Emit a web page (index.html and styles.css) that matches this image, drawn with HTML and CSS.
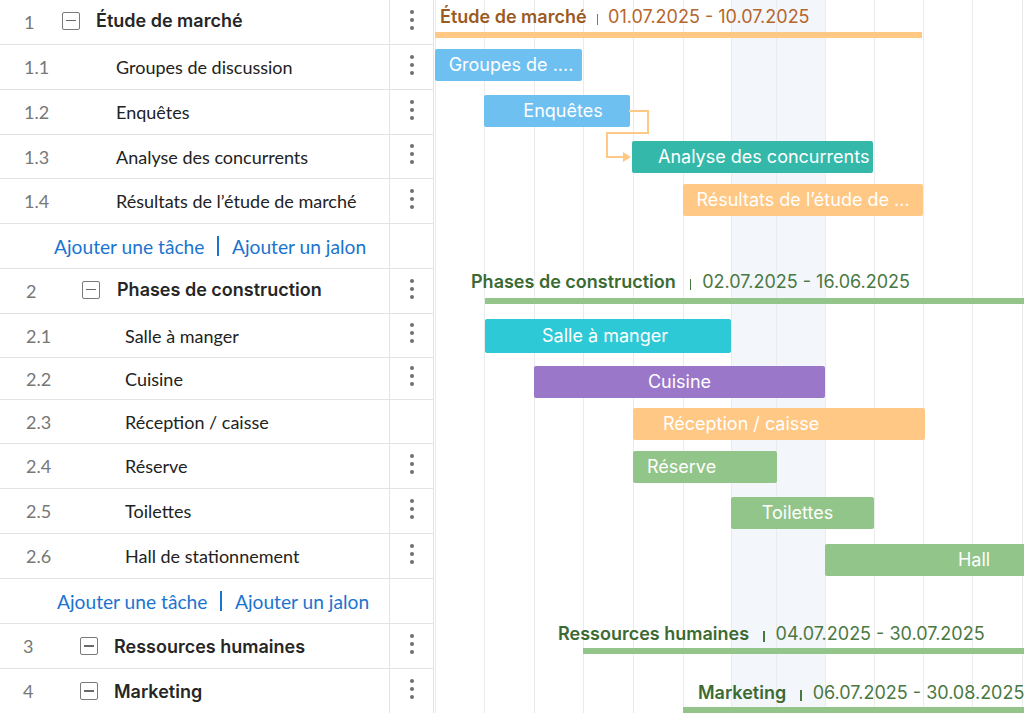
FILE: index.html
```html
<!DOCTYPE html>
<html lang="fr">
<head>
<meta charset="utf-8">
<title>Gantt</title>
<link rel="stylesheet" href="styles.css">
</head>
<body>
<div class="app">
  <div class="grid">
    <div class="row h45 g1">
      <div class="main"><span class="num">1</span><span class="box"></span><span class="name group">Étude de marché</span></div>
      <div class="menu"><span class="kebab"><i></i><i></i><i></i></span></div>
    </div>
    <div class="row h45 g1 task">
      <div class="main"><span class="num">1.1</span><span class="name">Groupes de discussion</span></div>
      <div class="menu"><span class="kebab"><i></i><i></i><i></i></span></div>
    </div>
    <div class="row h45 g1 task">
      <div class="main"><span class="num">1.2</span><span class="name">Enquêtes</span></div>
      <div class="menu"><span class="kebab"><i></i><i></i><i></i></span></div>
    </div>
    <div class="row h44 g1 task">
      <div class="main"><span class="num">1.3</span><span class="name">Analyse des concurrents</span></div>
      <div class="menu"><span class="kebab"><i></i><i></i><i></i></span></div>
    </div>
    <div class="row h45 g1 task">
      <div class="main"><span class="num">1.4</span><span class="name">Résultats de l’étude de marché</span></div>
      <div class="menu"><span class="kebab"><i></i><i></i><i></i></span></div>
    </div>
    <div class="row h45 add a1">
      <div class="main"><a class="link">Ajouter une tâche</a><span class="sep"></span><a class="link">Ajouter un jalon</a></div>
      <div class="menu"></div>
    </div>
    <div class="row h45 g2">
      <div class="main"><span class="num">2</span><span class="box"></span><span class="name group">Phases de construction</span></div>
      <div class="menu"><span class="kebab"><i></i><i></i><i></i></span></div>
    </div>
    <div class="row h44 g2 task">
      <div class="main"><span class="num">2.1</span><span class="name">Salle à manger</span></div>
      <div class="menu"><span class="kebab"><i></i><i></i><i></i></span></div>
    </div>
    <div class="row h42 g2 task">
      <div class="main"><span class="num">2.2</span><span class="name">Cuisine</span></div>
      <div class="menu"><span class="kebab"><i></i><i></i><i></i></span></div>
    </div>
    <div class="row h44 g2 task">
      <div class="main"><span class="num">2.3</span><span class="name">Réception / caisse</span></div>
      <div class="menu"></div>
    </div>
    <div class="row h45 g2 task">
      <div class="main"><span class="num">2.4</span><span class="name">Réserve</span></div>
      <div class="menu"><span class="kebab"><i></i><i></i><i></i></span></div>
    </div>
    <div class="row h45 g2 task">
      <div class="main"><span class="num">2.5</span><span class="name">Toilettes</span></div>
      <div class="menu"><span class="kebab"><i></i><i></i><i></i></span></div>
    </div>
    <div class="row h45 g2 task">
      <div class="main"><span class="num">2.6</span><span class="name">Hall de stationnement</span></div>
      <div class="menu"><span class="kebab"><i></i><i></i><i></i></span></div>
    </div>
    <div class="row h45 add a2">
      <div class="main"><a class="link">Ajouter une tâche</a><span class="sep"></span><a class="link">Ajouter un jalon</a></div>
      <div class="menu"></div>
    </div>
    <div class="row h45 g3">
      <div class="main"><span class="num">3</span><span class="box"></span><span class="name group">Ressources humaines</span></div>
      <div class="menu"><span class="kebab"><i></i><i></i><i></i></span></div>
    </div>
    <div class="row h45 g3">
      <div class="main"><span class="num">4</span><span class="box"></span><span class="name group">Marketing</span></div>
      <div class="menu"><span class="kebab"><i></i><i></i><i></i></span></div>
    </div>
  </div>

  <div class="chart">
    <div class="days">
      <span class="day" style="width:49px"></span>
      <span class="day" style="width:50px"></span>
      <span class="day" style="width:49px"></span>
      <span class="day" style="width:50px"></span>
      <span class="day" style="width:50px"></span>
      <span class="day" style="width:48px"></span>
      <span class="day off" style="width:45px"></span>
      <span class="day off" style="width:49px"></span>
      <span class="day" style="width:49px"></span>
      <span class="day" style="width:49px"></span>
      <span class="day" style="width:49px"></span>
      <span class="day" style="width:50px"></span>
      <span class="day" style="width:60px"></span>
    </div>

    <div class="crow h45 sum s1 orange">
      <div class="sum-label" style="margin-left:5px"><b>Étude de marché</b><span class="pipe"></span><span class="dates">01.07.2025 - 10.07.2025</span></div>
      <div class="sum-bar" style="margin-left:0px;width:487px"></div>
    </div>
    <div class="crow h45"><div class="bar blue mt4 pl5" style="margin-left:0px;width:147px">Groupes de ....</div></div>
    <div class="crow h45"><div class="bar blue mt5 pl12" style="margin-left:49px;width:146px">Enquêtes</div></div>
    <div class="crow h44"><div class="bar teal mt6 left pl26" style="margin-left:197px;width:241px">Analyse des concurrents</div></div>
    <div class="crow h45"><div class="bar amber mt5" style="margin-left:248px;width:240px">Résultats de l’étude de ...</div></div>
    <div class="crow h45"></div>
    <div class="crow h45 sum s2 green">
      <div class="sum-label" style="margin-left:36px"><b>Phases de construction</b><span class="pipe wide"></span><span class="dates">02.07.2025 - 16.06.2025</span></div>
      <div class="sum-bar" style="margin-left:50px;width:700px"></div>
    </div>
    <div class="crow h44"><div class="bar cyan mt5 tall pr6" style="margin-left:50px;width:246px">Salle à manger</div></div>
    <div class="crow h42"><div class="bar purple mt8" style="margin-left:99px;width:291px">Cuisine</div></div>
    <div class="crow h44"><div class="bar amber mt8 left pl30" style="margin-left:198px;width:292px">Réception / caisse</div></div>
    <div class="crow h45"><div class="bar lime mt7 left pl14" style="margin-left:198px;width:144px">Réserve</div></div>
    <div class="crow h45"><div class="bar lime mt8 pr10" style="margin-left:296px;width:143px">Toilettes</div></div>
    <div class="crow h45"><div class="bar lime mt10" style="margin-left:390px;width:298px">Hall</div></div>
    <div class="crow h45"></div>
    <div class="crow h45 sum s3 green">
      <div class="sum-label" style="margin-left:123px"><b>Ressources humaines</b><span class="pipe wide"></span><span class="dates">04.07.2025 - 30.07.2025</span></div>
      <div class="sum-bar" style="margin-left:148px;width:700px"></div>
    </div>
    <div class="crow h45 sum s4 green">
      <div class="sum-label" style="margin-left:263px"><b>Marketing</b><span class="pipe wide"></span><span class="dates">06.07.2025 - 30.08.2025</span></div>
      <div class="sum-bar" style="margin-left:248px;width:700px"></div>
    </div>

    <svg class="link-line" width="220" height="170" viewBox="0 0 220 170">
      <polyline points="195,111 214,111 214,133 173,133 173,157 190,157" fill="none" stroke="#ffc885" stroke-width="2"/>
      <polygon points="189,152 197,157 189,162" fill="#ffc885"/>
    </svg>
  </div>
</div>
</body>
</html>
```

FILE: styles.css
```css
* { box-sizing: border-box; }
html, body { margin: 0; padding: 0; background: #fff; }
body { width: 1024px; height: 713px; overflow: hidden; }

.app { display: flex; height: 713px; }

/* ---------- left grid ---------- */
.grid {
  width: 434px;
  flex: none;
  font-family: "Lato", "Liberation Sans", sans-serif;
  font-size: 18px;
  color: #222;
}
.row {
  display: flex;
  border-bottom: 1px solid #e3e3e3;
}
.h45 { height: 45px; }
.h44 { height: 44px; }
.h42 { height: 42px; }

.main {
  width: 390px;
  display: flex;
  align-items: center;
  border-right: 1px solid #e3e3e3;
  white-space: nowrap;
}
.menu {
  width: 44px;
  display: flex;
  align-items: center;
  justify-content: center;
  border-right: 1px solid #e3e3e3;
}
.kebab {
  display: flex;
  flex-direction: column;
  gap: 4px;
  margin-top: -5px;
}
.kebab i {
  display: block;
  width: 4px;
  height: 4px;
  border-radius: 50%;
  background: #707070;
}

.num { color: #777; flex: none; }
.g1 .main { padding-left: 24px; }
.g1 .num { width: 38px; }
.g1.task .num { width: 92px; }
.g2 .main { padding-left: 26px; }
.g2 .num { width: 56px; }
.g2.task .num { width: 99px; }
.g3 .main { padding-left: 23px; }
.g3 .num { width: 57px; }

.box {
  flex: none;
  width: 18px;
  height: 18px;
  border: 1px solid #7a7a7a;
  border-radius: 2px;
  margin-right: 16px;
  margin-top: -3px;
  display: flex;
  align-items: center;
  justify-content: center;
}
.box::before {
  content: "";
  width: 10px;
  height: 1.5px;
  background: #6a6a6a;
}
.g2 .box { margin-right: 17px; }
.group {
  font-family: "Inter", "Liberation Sans", sans-serif;
  font-weight: 600;
  font-size: 18px;
  margin-top: -3px;
  color: #262626;
}
.g3 .group { margin-top: 0; }
.g3 .box { margin-top: 0; }

.add .main { padding-left: 54px; }
.add.a2 .main { padding-left: 57px; }
.link { color: #1a74cf; text-decoration: none; font-size: 19.2px; }
.sep {
  display: inline-block;
  width: 1.5px;
  height: 20px;
  background: #1a74cf;
  margin: 0 13px;
}

/* ---------- chart ---------- */
.chart {
  position: relative;
  flex: 1;
  overflow: hidden;
  font-family: "Inter", "Liberation Sans", sans-serif;
  font-size: 18px;
  padding-left: 1px;
}
.days {
  position: absolute;
  top: 0; bottom: 0; left: 1px;
  display: flex;
  z-index: 0;
}
.day {
  flex: none;
  height: 100%;
  border-left: 1px solid #ebebeb;
}
.day.off { background: #f3f6fb; }

.crow {
  position: relative;
  z-index: 1;
  display: flex;
  align-items: flex-start;
}
.sum { flex-direction: column; }
.sum-label {
  line-height: 20px;
  white-space: nowrap;
  display: flex;
  align-items: center;
}
.sum-label b { font-weight: 600; }
.pipe {
  display: inline-block;
  width: 1.5px;
  height: 11px;
  margin: 4px 10px 0 10px;
}
.pipe.wide { margin: 4px 11px 0 14px; }
.sum-bar { height: 6px; flex: none; }
.s1 { padding-top: 7px; }
.s1 .sum-bar { margin-top: 5px; }
.s2 { padding-top: 3px; }
.s2 .sum-bar { margin-top: 6px; }
.s3 { padding-top: 0; }
.s3 .sum-bar { margin-top: 4px; }
.s4 { padding-top: 14px; }
.s4 .sum-bar { margin-top: 4px; }

.orange b { color: #9b5b1f; }
.orange .dates { color: #b5662b; }
.orange .pipe { background: #b5662b; }
.orange .sum-bar { background: #ffc885; }
.green b { color: #3b6a33; }
.green .dates { color: #4a7843; }
.green .pipe { background: #4a7843; }
.green .sum-bar { background: #93c58a; }

.bar {
  flex: none;
  height: 32px;
  line-height: 32px;
  border-radius: 2px;
  color: #fff;
  text-align: center;
  white-space: nowrap;
  overflow: hidden;
}
.bar.tall { height: 34px; line-height: 34px; }
.bar.left { text-align: left; }
.pl5 { padding-left: 5px; }
.pl12 { padding-left: 12px; }
.pl14 { padding-left: 14px; }
.pl26 { padding-left: 26px; }
.pl30 { padding-left: 30px; }
.pr6 { padding-right: 6px; }
.pr10 { padding-right: 10px; }
.mt4 { margin-top: 4px; }
.mt5 { margin-top: 5px; }
.mt6 { margin-top: 6px; }
.mt7 { margin-top: 7px; }
.mt8 { margin-top: 8px; }
.mt10 { margin-top: 10px; }

.blue { background: #6ec0f1; }
.teal { background: #33b8aa; }
.amber { background: #ffc885; }
.cyan { background: #2ec9d6; }
.purple { background: #9a77c8; }
.lime { background: #92c58a; }

.link-line {
  position: absolute;
  top: 0;
  left: 0;
  z-index: 2;
}
```
